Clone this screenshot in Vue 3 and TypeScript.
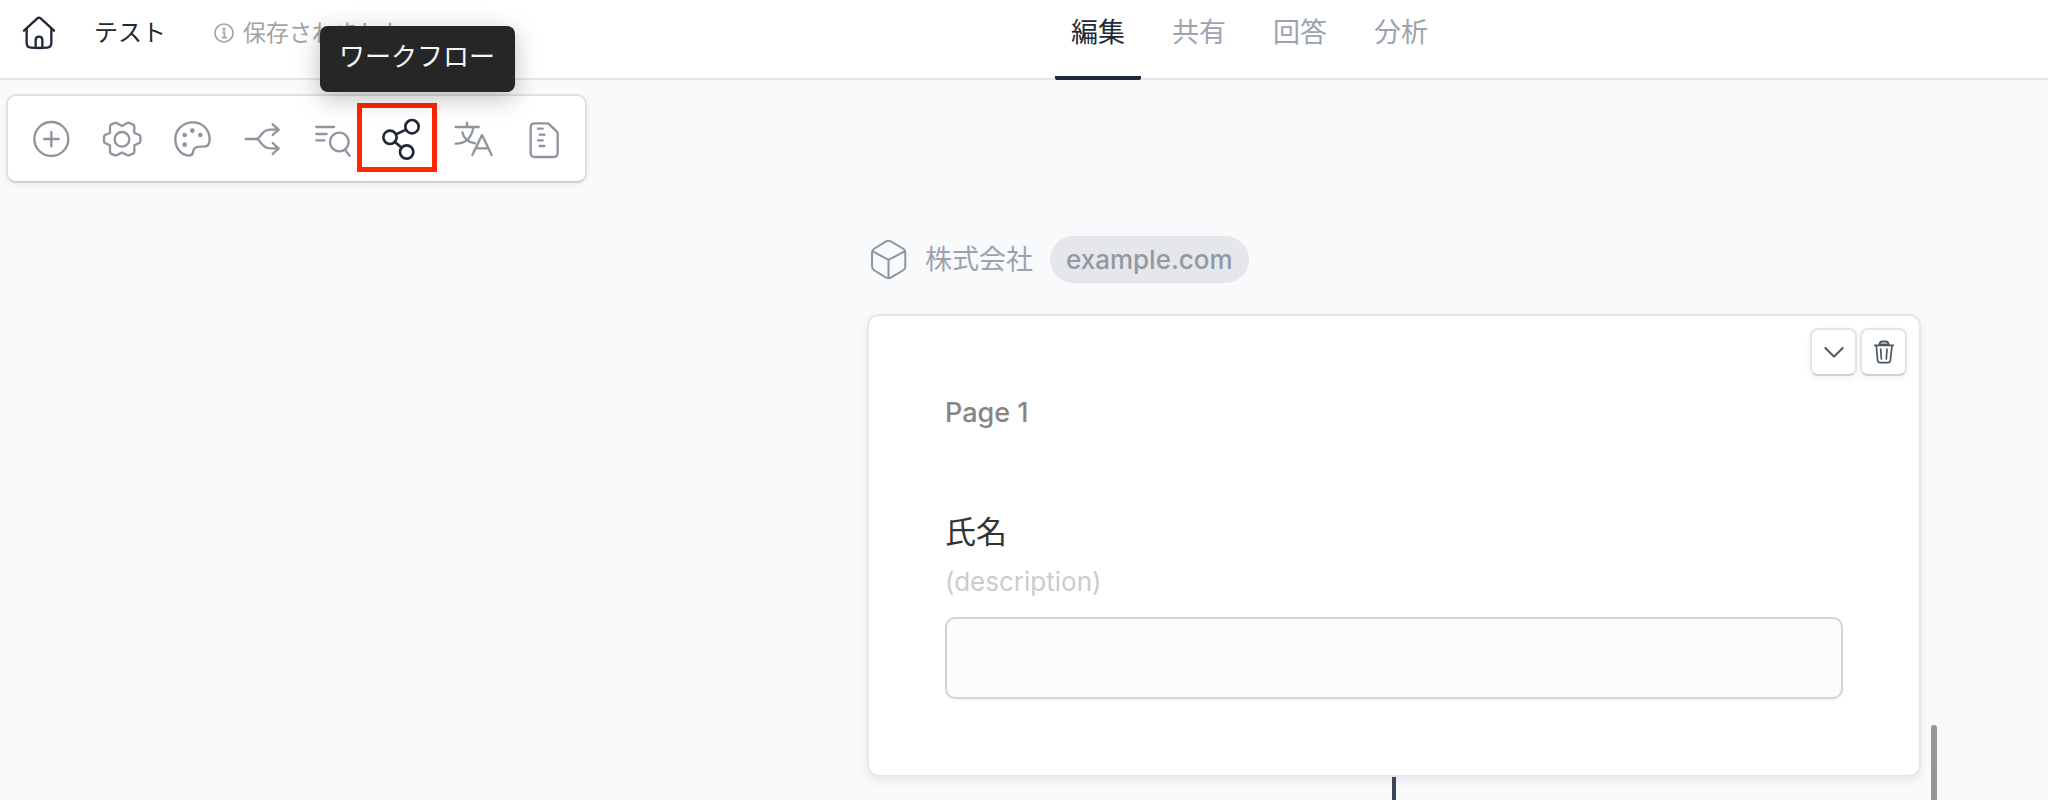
<script setup lang="ts">
import { ref } from 'vue'

interface Tool {
  id: string
  label: string
  box: string
}

const tabs: string[] = ['編集', '共有', '回答', '分析']
const activeTab = ref('編集')
const answer = ref('')

const tools: Tool[] = [
  { id: 'add', label: '追加', box: '93 356 120 120' },
  { id: 'settings', label: '設定', box: '304 356 120 120' },
  { id: 'theme', label: 'テーマ', box: '515 356 120 120' },
  { id: 'logic', label: 'ロジック', box: '726 356 120 120' },
  { id: 'find', label: '検索', box: '38 356 120 120' },
  { id: 'workflow', label: 'ワークフロー', box: '248 356 120 120' },
  { id: 'translate', label: '翻訳', box: '460 356 120 120' },
  { id: 'document', label: 'ドキュメント', box: '672 356 120 120' },
]
</script>

<template>
  <div class="app">
    <header class="header">
      <div class="header-left">
        <a href="#" class="home" aria-label="ホーム">
          <svg viewBox="66 48 102 102" fill="none" stroke="currentColor" stroke-width="7" stroke-linecap="round" stroke-linejoin="round">
            <path d="M72 92 L112 55 Q117 51 122 55 L162 92" />
            <path d="M80 86 V129 Q80 142 93 143 Q117 145 141 143 Q154 142 154 129 V86" />
            <path d="M107 142 V120 Q107 110 117 110 Q127 110 127 120 V142" />
          </svg>
        </a>
        <span class="title">テスト</span>
        <span class="status">
          <svg viewBox="0 0 60 60" fill="none" stroke="currentColor" stroke-width="5" stroke-linecap="round" aria-hidden="true">
            <circle cx="30" cy="30" r="27" />
            <path d="M26 27 H31 V44 M25 44 H37" />
            <circle cx="30" cy="18" r="2" fill="currentColor" />
          </svg>
          保存されました
        </span>
      </div>
      <nav class="tabs">
        <button
          v-for="tab in tabs"
          :key="tab"
          type="button"
          class="tab"
          :class="{ active: tab === activeTab }"
          @click="activeTab = tab"
        >{{ tab }}</button>
      </nav>
    </header>

    <div class="workspace">
      <aside class="side">
        <ul class="toolbar">
          <li v-for="tool in tools" :key="tool.id" class="tool-item">
            <button type="button" class="tool" :class="{ current: tool.id === 'workflow' }" :aria-label="tool.label">
              <svg :viewBox="tool.box" fill="none" stroke="currentColor" stroke-width="7" stroke-linecap="round" stroke-linejoin="round">
                <template v-if="tool.id === 'add'">
                  <circle cx="154" cy="416" r="51" />
                  <path d="M132 416 H176 M154 395 V438" />
                </template>
                <template v-else-if="tool.id === 'settings'">
                  <circle cx="364" cy="417" r="22" />
                  <path d="M364 377 L380 368 Q383 366 386 368 L397 373 Q401 375 401 379 V398 L416 404 Q419 406 419 410 V423 Q419 427 416 428 L401 435 V454 Q401 458 397 460 L385 465 Q382 466 379 464 L364 457 L349 464 Q346 466 343 465 L331 460 Q328 458 328 454 V435 L313 428 Q310 427 310 423 V410 Q310 406 313 404 L328 398 V379 Q328 375 331 373 L342 368 Q345 366 348 368 Z" />
                </template>
                <template v-else-if="tool.id === 'theme'">
                  <path d="M577 366 C607 366 628 388 628 417 Q628 439 611 439 H599 Q579 439 578 456 Q576 467 564 466 C540 462 525 443 525 416 C525 388 548 366 577 366 Z" />
                  <g fill="currentColor" stroke="none">
                    <circle cx="553" cy="404" r="7" />
                    <circle cx="576" cy="391" r="7" />
                    <circle cx="600" cy="404" r="7" />
                    <circle cx="553" cy="433" r="7" />
                  </g>
                </template>
                <template v-else-if="tool.id === 'logic'">
                  <path d="M737 416 H768 Q775 416 780 408 Q793 388 810 388 H835 M818 372 L836 388 L818 404" />
                  <path d="M768 416 Q775 416 780 424 Q793 444 810 444 H835 M818 428 L836 444 L818 461" />
                </template>
                <template v-else-if="tool.id === 'find'">
                  <path d="M48 380 H101 M48 401 H79 M48 420 H72 M134 449 L148 466" />
                  <circle cx="117" cy="425" r="28" />
                </template>
                <template v-else-if="tool.id === 'workflow'">
                  <g stroke-width="8">
                    <circle cx="335" cy="379" r="20" />
                    <circle cx="269" cy="411" r="20" />
                    <circle cx="319" cy="455" r="20" />
                    <path d="M287 402 L317 388 M284 425 L304 442" />
                  </g>
                </template>
                <template v-else-if="tool.id === 'translate'">
                  <path d="M468 380 H537 M502 367 V380 M521 382 C516 410 500 430 468 430 M488 396 C492 414 506 426 526 429" />
                  <path d="M518 464 L547 404 L576 464 M528 444 H567" />
                </template>
                <template v-else>
                  <path d="M704 369 H741 Q745 369 748 372 L770 393 Q773 396 773 400 V458 Q773 470 761 470 H704 Q692 470 692 458 V381 Q692 369 704 369 Z" />
                  <path d="M714 385 H728 M719 403 H733 M714 420 H728 M719 437 H733" />
                </template>
              </svg>
            </button>
            <template v-if="tool.id === 'workflow'">
              <span class="highlight"></span>
              <span class="tooltip" role="tooltip">{{ tool.label }}</span>
            </template>
          </li>
        </ul>
      </aside>

      <main class="content">
        <div class="brand">
          <svg viewBox="60 58 110 122" fill="none" stroke="currentColor" stroke-width="6" stroke-linecap="round" stroke-linejoin="round" aria-hidden="true">
            <path d="M108 65 Q115 61 122 65 L159 87 Q165 91 165 98 V140 Q165 147 159 151 L122 173 Q115 177 108 173 L72 151 Q66 147 66 140 V98 Q66 91 72 87 Z" />
            <path d="M68 95 L115 120 L163 95 M115 120 V174" />
          </svg>
          <span>株式会社</span>
          <span class="domain">example.com</span>
        </div>

        <section class="card">
          <div class="actions">
            <button type="button" class="action" aria-label="折りたたむ">
              <svg viewBox="0 0 96 96" fill="none" stroke="currentColor" stroke-width="6" stroke-linecap="round" stroke-linejoin="round">
                <path d="M22 36 L48 62 L74 36" />
              </svg>
            </button>
            <button type="button" class="action" aria-label="削除">
              <svg viewBox="263 107 96 96" fill="none" stroke="currentColor" stroke-width="5" stroke-linecap="round" stroke-linejoin="round">
                <path d="M283 135 H339 M288 136 L292 181 Q293 187 299 187 H323 Q329 187 330 181 L335 136 M301 146 L303 176 M320 146 L318 176" />
                <path d="M297 133 Q298 123 306 123 H316 Q324 123 325 133 Z" fill="#c8cdd5" />
              </svg>
            </button>
          </div>
          <h2 class="page-name">Page 1</h2>
          <label class="question" for="name">氏名</label>
          <p id="name-description" class="description">(description)</p>
          <input id="name" v-model="answer" type="text" class="answer" aria-describedby="name-description" />
        </section>
        <div class="connector"></div>
      </main>
      <div class="scroll-thumb"></div>
    </div>
  </div>
</template>

<style>
html,
body {
  margin: 0;
  background: #f8fafc;
}
</style>

<style scoped>
.app,
.app * {
  box-sizing: border-box;
}

.app {
  display: flex;
  flex-direction: column;
  height: 100vh;
  overflow: hidden;
  background: #f8fafc;
  font-family: Inter, "Noto Sans CJK JP", sans-serif;
}

svg {
  display: block;
  flex: none;
  overflow: visible;
}

button {
  padding: 0;
  border: 0;
  background: none;
  font: inherit;
  cursor: pointer;
}

.header {
  display: grid;
  grid-template-columns: 1fr auto 604px;
  height: 80px;
  flex: none;
  border-bottom: 2px solid #e4e6eb;
  background: #fff;
}

.header-left {
  display: flex;
  align-items: center;
  height: 66px;
  padding-left: 22px;
  white-space: nowrap;
}

.home {
  color: #1f2937;
}

.home svg {
  width: 34px;
  height: 34px;
}

.title {
  margin-left: 38px;
  color: #1f2937;
  font-size: 24px;
  line-height: 32px;
}

.status {
  display: flex;
  align-items: center;
  gap: 9px;
  margin-left: 48px;
  color: #a3a3a3;
  font-size: 23px;
  line-height: 32px;
}

.status svg {
  width: 20px;
  height: 20px;
}

.tabs {
  display: flex;
  gap: 15px;
}

.tab {
  height: 80px;
  padding: 0 16px 10px;
  border-bottom: 4px solid transparent;
  border-radius: 2px;
  color: #9ca3af;
  font-size: 27px;
  line-height: 40px;
}

.tab.active {
  border-color: #1f2937;
  color: #1f2937;
}

.workspace {
  position: relative;
  display: flex;
  flex: 1;
}

.side {
  flex: 0 0 867px;
  padding: 14px 0 0 6px;
}

.toolbar {
  display: flex;
  width: 581px;
  height: 89px;
  margin: 0;
  padding: 0 6px 0 8px;
  border: 2px solid #dfe1e4;
  border-bottom-color: #cccfd3;
  border-radius: 10px;
  background: #fff;
  box-shadow: 0 2px 5px rgba(0, 0, 0, 0.06);
  list-style: none;
}

.tool-item {
  position: relative;
  display: flex;
  flex: 1;
  align-items: center;
  justify-content: center;
}

.tool {
  color: #8f959e;
}

.tool.current {
  color: #1f2937;
}

.tool svg {
  width: 40px;
  height: 40px;
}

.highlight {
  position: absolute;
  top: 7px;
  left: -11px;
  width: 80px;
  height: 69px;
  border: 5px solid #ff2600;
  pointer-events: none;
}

.tooltip {
  position: absolute;
  bottom: 89px;
  left: -48px;
  padding: 13px 20px 17px 19px;
  border-radius: 8px;
  background: #262626;
  box-shadow: 0 6px 24px rgba(0, 0, 0, 0.26);
  color: #f5f5f5;
  font-size: 26px;
  line-height: 36px;
  white-space: nowrap;
}

.content {
  display: flex;
  flex: 1;
  flex-direction: column;
  min-width: 0;
  padding: 156px 127px 0 0;
}

.brand {
  display: flex;
  align-items: center;
  height: 47px;
  padding-left: 3px;
  color: #9ca3af;
  font-size: 27px;
  line-height: 40px;
}

.brand svg {
  width: 37px;
  height: 41px;
  margin-right: 18px;
  color: #8f959e;
}

.domain {
  margin-left: 17px;
  padding: 4px 16px 3px;
  border-radius: 24px;
  background: #e5e7eb;
  color: #9299a3;
  font-size: 26px;
  font-weight: 500;
}

.card {
  display: flex;
  flex-direction: column;
  margin-top: 31px;
  padding: 12px 12px 76px 76px;
  border: 2px solid #e6e7e8;
  border-radius: 12px;
  background: #fff;
  box-shadow: 0 4px 10px rgba(0, 0, 0, 0.08);
}

.actions {
  display: flex;
  align-self: flex-end;
  gap: 3px;
}

.action {
  display: grid;
  place-items: center;
  width: 47px;
  height: 48px;
  border: 2px solid #e4e5e6;
  border-bottom-color: #cfd0d2;
  border-radius: 8px;
  background: #fff;
  box-shadow: 0 2px 6px rgba(0, 0, 0, 0.06);
  color: #4b5563;
}

.action svg {
  width: 32px;
  height: 32px;
}

.page-name {
  margin: 17px 0 0;
  color: #858585;
  font-size: 27px;
  font-weight: 500;
  line-height: 40px;
}

.question {
  margin-top: 75px;
  color: #333;
  font-size: 31px;
  line-height: 48px;
}

.description {
  margin: 6px 0 0;
  color: #ccc;
  font-size: 26px;
  line-height: 40px;
}

.answer {
  height: 82px;
  margin: 15px 64px 0 0;
  padding: 0 20px;
  border: 2px solid #d4d4d4;
  border-radius: 10px;
  background: #fcfcfc;
  box-shadow: 0 2px 3px rgba(0, 0, 0, 0.04);
  font: inherit;
  font-size: 27px;
}

.connector {
  flex: 1;
  align-self: center;
  width: 4px;
  background: #3b4657;
}

.scroll-thumb {
  position: absolute;
  right: 111px;
  bottom: 0;
  width: 6px;
  height: 75px;
  border-radius: 3px 3px 0 0;
  background: #969896;
}
</style>
